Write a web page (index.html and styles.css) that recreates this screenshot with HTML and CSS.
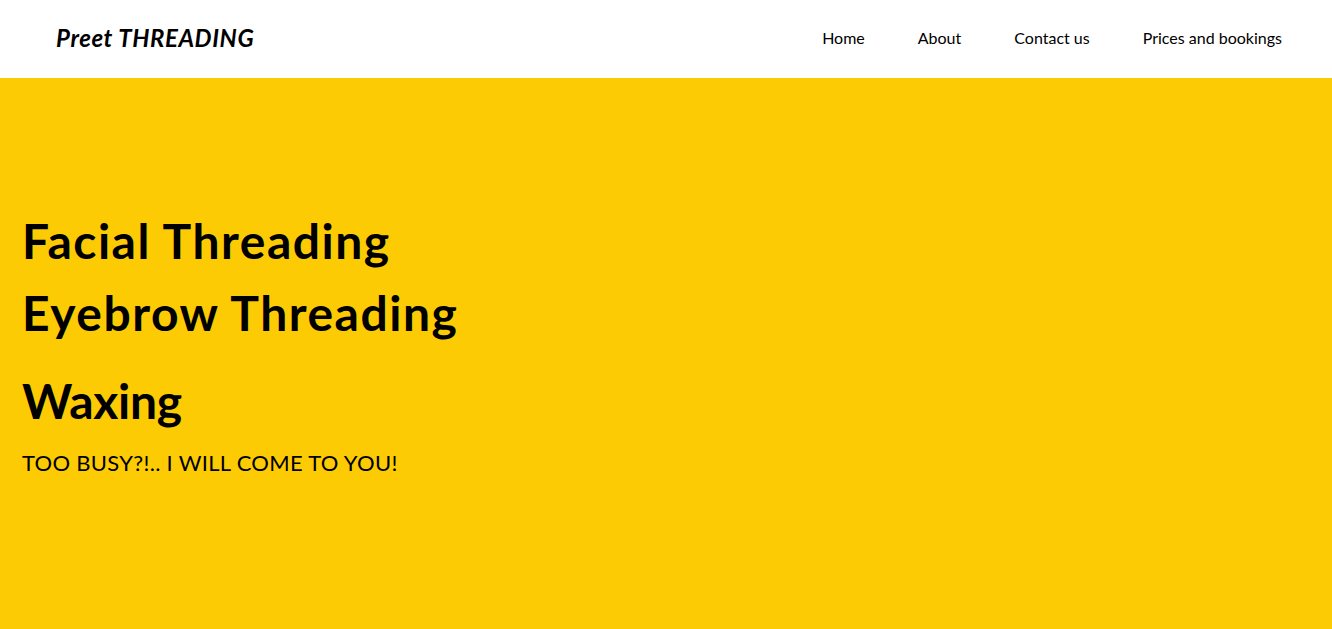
FILE: index.html
```html
<!DOCTYPE html>
<html lang="en">
<head>
<meta charset="utf-8">
<title>Preet Threading</title>
<link rel="stylesheet" href="styles.css">
</head>
<body>
<header class="site-header">
  <div class="logo">Preet THREADING</div>
  <nav class="nav">
    <a class="nav-link" href="#">Home</a>
    <a class="nav-link" href="#">About</a>
    <a class="nav-link" href="#">Contact us</a>
    <a class="nav-link" href="#">Prices and bookings</a>
  </nav>
</header>
<main class="hero">
  <h1 class="hero-title">Facial Threading</h1>
  <h1 class="hero-title">Eyebrow Threading</h1>
  <h1 class="hero-title hero-title-last">Waxing</h1>
  <p class="hero-sub">TOO BUSY?!.. I WILL COME TO YOU!</p>
</main>
</body>
</html>
```
FILE: styles.css
```css
html, body {
  margin: 0;
  padding: 0;
}
body {
  font-family: "Lato", "DejaVu Sans", sans-serif;
  color: #000;
  background: #fccb03;
}
.site-header {
  height: 78px;
  background: #fff;
  display: flex;
  align-items: center;
  justify-content: space-between;
  padding: 0 50px 4px 56px;
  box-sizing: border-box;
}
.logo {
  font-size: 24px;
  font-weight: bold;
  font-style: italic;
  letter-spacing: 0.6px;
}
.nav {
  display: flex;
  gap: 53px;
}
.nav-link {
  color: #000;
  text-decoration: none;
  font-size: 16px;
}
.hero {
  height: 551px;
  padding: 127px 22px 0;
  box-sizing: border-box;
}
.hero-title {
  margin: 0;
  font-size: 48px;
  font-weight: bold;
  line-height: 72px;
  letter-spacing: 1.5px;
}
.hero-title-last {
  margin-top: 16px;
  letter-spacing: -0.3px;
}
.hero-sub {
  margin: 12px 0 0;
  font-size: 22px;
  letter-spacing: 0.3px;
}
```
